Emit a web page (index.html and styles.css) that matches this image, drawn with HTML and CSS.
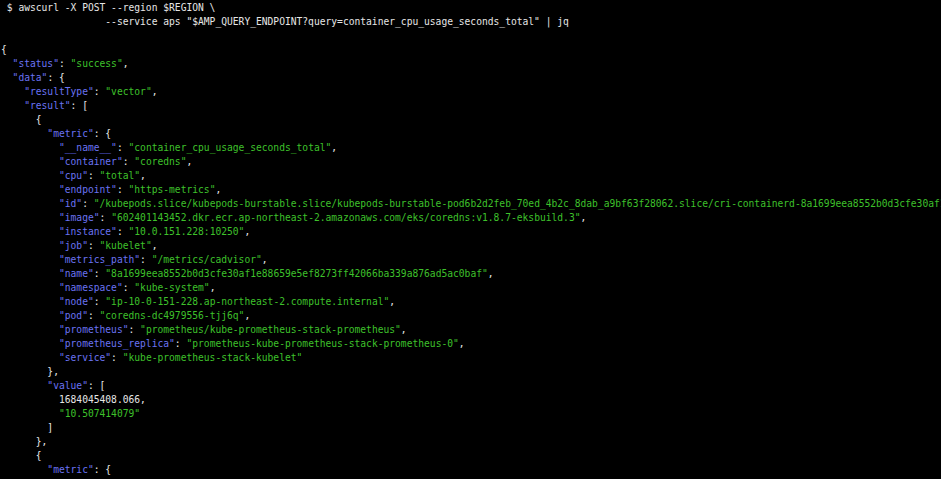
FILE: index.html
```html
<!DOCTYPE html>
<html lang="en">
<head>
<meta charset="utf-8">
<title>awscurl AMP query</title>
<link rel="stylesheet" href="styles.css">
</head>
<body>
<main class="terminal">
<pre class="output"> $ awscurl -X POST --region $REGION \
                  --service aps "$AMP_QUERY_ENDPOINT?query=container_cpu_usage_seconds_total" | jq

{
  <span class="k">"status"</span>: <span class="s">"success"</span>,
  <span class="k">"data"</span>: {
    <span class="k">"resultType"</span>: <span class="s">"vector"</span>,
    <span class="k">"result"</span>: [
      {
        <span class="k">"metric"</span>: {
          <span class="k">"__name__"</span>: <span class="s">"container_cpu_usage_seconds_total"</span>,
          <span class="k">"container"</span>: <span class="s">"coredns"</span>,
          <span class="k">"cpu"</span>: <span class="s">"total"</span>,
          <span class="k">"endpoint"</span>: <span class="s">"https-metrics"</span>,
          <span class="k">"id"</span>: <span class="s">"/kubepods.slice/kubepods-burstable.slice/kubepods-burstable-pod6b2d2feb_70ed_4b2c_8dab_a9bf63f28062.slice/cri-containerd-8a1699eea8552b0d3cfe30af1e88659e5ef8273ff42066ba339a876ad5ac0baf.scope"</span>,
          <span class="k">"image"</span>: <span class="s">"602401143452.dkr.ecr.ap-northeast-2.amazonaws.com/eks/coredns:v1.8.7-eksbuild.3"</span>,
          <span class="k">"instance"</span>: <span class="s">"10.0.151.228:10250"</span>,
          <span class="k">"job"</span>: <span class="s">"kubelet"</span>,
          <span class="k">"metrics_path"</span>: <span class="s">"/metrics/cadvisor"</span>,
          <span class="k">"name"</span>: <span class="s">"8a1699eea8552b0d3cfe30af1e88659e5ef8273ff42066ba339a876ad5ac0baf"</span>,
          <span class="k">"namespace"</span>: <span class="s">"kube-system"</span>,
          <span class="k">"node"</span>: <span class="s">"ip-10-0-151-228.ap-northeast-2.compute.internal"</span>,
          <span class="k">"pod"</span>: <span class="s">"coredns-dc4979556-tjj6q"</span>,
          <span class="k">"prometheus"</span>: <span class="s">"prometheus/kube-prometheus-stack-prometheus"</span>,
          <span class="k">"prometheus_replica"</span>: <span class="s">"prometheus-kube-prometheus-stack-prometheus-0"</span>,
          <span class="k">"service"</span>: <span class="s">"kube-prometheus-stack-kubelet"</span>
        },
        <span class="k">"value"</span>: [
          <span class="n">1684045408.066</span>,
          <span class="s">"10.507414079"</span>
        ]
      },
      {
        <span class="k">"metric"</span>: {
</pre>
</main>
</body>
</html>
```

FILE: styles.css
```css
html, body {
  margin: 0;
  padding: 0;
  background: #000;
  width: 941px;
  height: 479px;
  overflow: hidden;
}

.terminal {
  background: #000;
  height: 479px;
  overflow: hidden;
  padding: 1px 0 0 1px;
  box-sizing: border-box;
}

.output {
  margin: 0;
  font-family: "DejaVu Sans Mono", "Liberation Mono", monospace;
  font-size: 9.63px;
  line-height: 14px;
  color: #e6e6e6;
  white-space: pre;
}

.k {
  color: #6a73f2;
}

.s {
  color: #3ec12b;
}

.n {
  color: #e6e6e6;
}
```
